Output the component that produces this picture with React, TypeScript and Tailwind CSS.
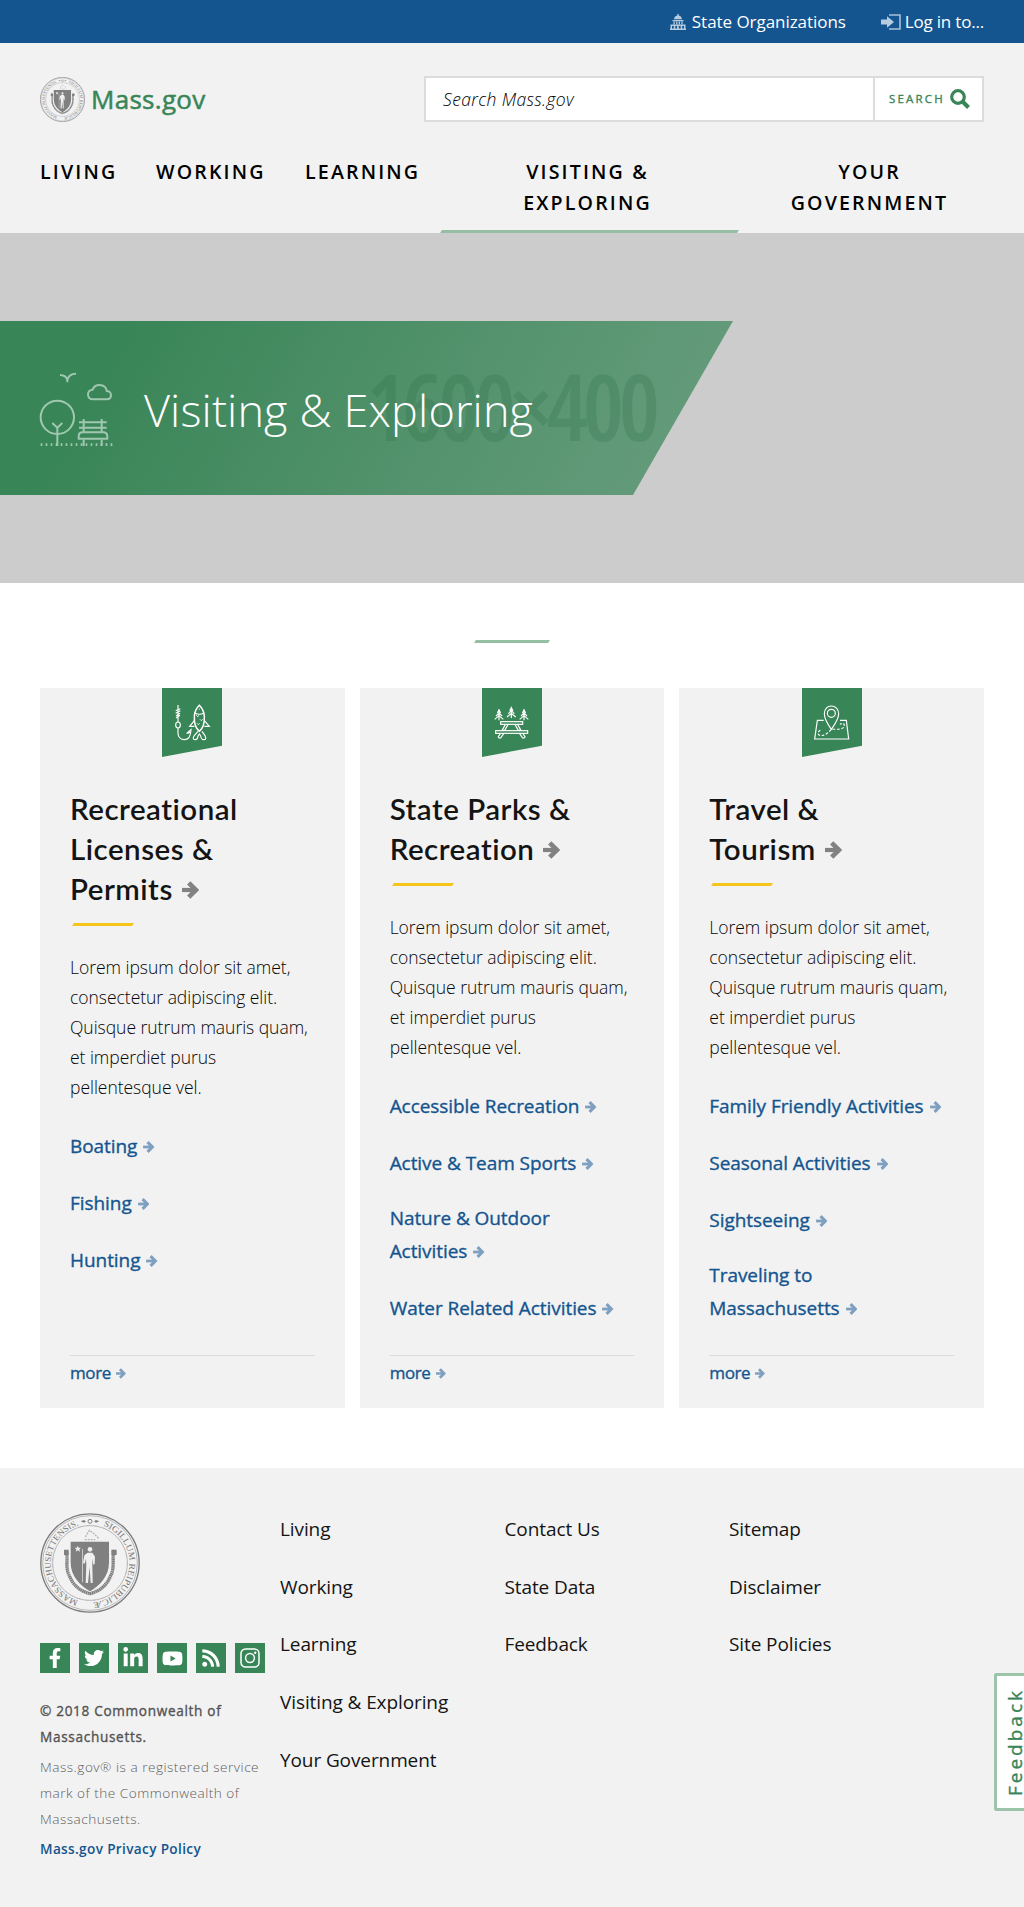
import React from "react";
import { FaFacebookF, FaTwitter, FaLinkedinIn, FaYoutube, FaRss } from "react-icons/fa";

const MEDIUM = "[-webkit-text-stroke:0.35px_currentColor]";

function Arrow({ className }: { className: string }) {
  return (
    <svg viewBox="0 0 17 18" className={className} fill="none" stroke="currentColor" strokeWidth="4.2">
      <path d="M0 9h13" />
      <path d="M6.7 1.8 13.9 9l-7.2 7.2" strokeWidth="4.6" />
    </svg>
  );
}

function Seal({ className }: { className: string }) {
  return (
    <svg viewBox="0 0 300 300" className={className}>
      <defs>
        <path id="seal-ring" d="M150 268 A118 118 0 1 1 150.5 268" />
      </defs>
      <g fill="none" stroke="#7b7b7b">
        <circle cx="150" cy="150" r="147.5" strokeWidth="4" />
        <circle cx="150" cy="150" r="142" strokeWidth="1.5" />
        <circle cx="150" cy="150" r="112" strokeWidth="3" strokeDasharray="2 1.5" />
      </g>
      <text fill="#777777" fontFamily="Liberation Serif, serif" fontSize="26">
        <textPath href="#seal-ring" startOffset="36" textLength="300" lengthAdjust="spacingAndGlyphs">
          MASSACHUSETTENSIS.
        </textPath>
      </text>
      <text fill="#777777" fontFamily="Liberation Serif, serif" fontSize="26">
        <textPath href="#seal-ring" startOffset="410" textLength="322" lengthAdjust="spacingAndGlyphs">
          SIGILLUM REIPUBLICÆ
        </textPath>
      </text>
      <g fill="#808080">
        <path d="M122 25l10-4 6 4-6 4zM178 25l-10-4-6 4 6 4z" />
        <circle cx="150" cy="25" r="6" fill="none" stroke="#808080" strokeWidth="3" />
        <path d="M92 86h115v62c0 42-27 70-57 87-30-17-58-45-58-87z" />
      </g>
      <g fill="none" stroke="#808080" strokeWidth="10">
        <path d="M78 112c8 20-4 50 10 76 12 30 32 46 62 54 30-8 50-24 62-54 14-26 2-56 12-76" strokeDasharray="5 1" />
        <path d="M72 118h14M214 118h16" strokeWidth="16" />
      </g>
      <path d="M134 80h32M136 72l12-20 14 10 14 14" fill="none" stroke="#b5b5b5" strokeWidth="4" strokeDasharray="6 3" />
      <g fill="#f0f0f0">
        <path d="M113 98l3 6 7 0-5 5 2 7-7-4-6 4 2-7-5-5 7 0z" />
        <circle cx="150" cy="109" r="7" />
        <path d="M143 119h14l8 12-1 22-4 2-2-18-1 18 1 55h-6l-3-48-5 48h-7l2-55-1-18-4 16-5-4 4-22z" />
        <path d="M126 108h2v100h-2z" />
      </g>
    </svg>
  );
}

function CapitolIcon() {
  return (
    <svg viewBox="0 0 16 16" className="h-4 w-4" fill="#b8cce0">
      <path d="M7.3 0h1.4v1.6C10.600 2 11.900 3.500 12 5.300H4C4.100 3.500 5.400 2 7.300 1.600zM2.500 6h11v1.300h-11z" />
      <path d="M3.500 7.600h1.300v2.600H3.500zM6.100 7.600h1.300v2.600H6.100zM8.700 7.600H10v2.600H8.700zM11.300 7.600h1.300v2.600h-1.300zM.500 10.400h15v1.500H.500zM.500 12H2v2.400H.500zM3.800 12h1.500v2.400H3.800zM7.100 12h1.700v2.400H7.100zM10.700 12h1.500v2.400h-1.500zM14 12h1.500v2.400H14zM0 14.400h16V16H0z" />
    </svg>
  );
}

function LoginIcon() {
  return (
    <svg viewBox="0 0 20 16" className="h-4 w-5">
      <path d="M8 1h11v14H8" fill="none" stroke="#a9c1d9" strokeWidth="1.6" />
      <path d="M0 5.500h6V2.200L13 8l-7 5.800v-3.300H0z" fill="#b8cce0" />
    </svg>
  );
}

function ParkIcon() {
  return (
    <svg viewBox="0 0 228 225" className="mt-[3px] h-[75px] w-[76px]" fill="none" stroke="#a0c7b0" strokeWidth="6" strokeLinejoin="round">
      <circle cx="55" cy="136" r="50" />
      <path d="M55 164v58M40 153l15 14 15-14" />
      <path d="M63 9c13 0 20 6 22 16v6M111 5c-15 0-24 8-26 20" />
      <path d="M161 82h42c8 0 13-5 13-12 0-8-6-13-13-13 0-10-9-18-21-18-10 0-18 5-21 14-9 0-14 7-14 14 0 9 6 15 14 15z" />
      <path d="M120 151h83M120 167h83M134 141v41M188 141v41" />
      <path d="M119 200v-6c0-8 5-13 12-13h61c8 0 13 5 13 13v6z" />
      <path d="M134 203v19M188 203v19" />
      <path d="M5 218h50M65 218h160" strokeDasharray="5 10" strokeWidth="8" />
    </svg>
  );
}

function InstagramIcon({ className }: { className: string }) {
  return (
    <svg viewBox="0 0 20 20" className={className} fill="none" stroke="currentColor" strokeWidth="1.500">
      <rect x="1" y="1" width="18" height="18" rx="4.500" />
      <circle cx="10" cy="10" r="4.400" />
      <circle cx="15.200" cy="4.800" r="1.200" fill="currentColor" stroke="none" />
    </svg>
  );
}

function FishArt() {
  return (
    <g>
      <path d="M48 51v52M41 68l14-6M41 76l14-8M42 84l12-8M42 90l12-8" />
      <ellipse cx="48" cy="111" rx="7" ry="9" />
      <path d="M48 120v16c0 11 8 19 19 19s19-8 20-30L74 136l10-3" />
      <path d="M112 52c-9 9-14 20-15 32-1 20 3 36 15 46 12-10 16-26 15-46-1-12-6-23-15-32z" strokeWidth="4.500" />
      <path d="M98 74c8 6 20 6 28 0M97 98l-14 17h14M127 98l15 17h-15" />
      <path d="M108 130l-10 11c-6 9-6 14 2 14 7 0 7-5 8-11l4-6 4 6c1 6 2 11 9 11 7 0 8-5 4-12l-9-13" />
      <path d="M103 82l4 4 4-4M114 94l4 4 4-4M105 106l4 4 4-4M112 62v3" strokeWidth="3" />
    </g>
  );
}

function Pine({ x, y }: { x: number; y: number }) {
  return (
    <g transform={`translate(${x} ${y})`}>
      <path d="M0 0v34M-5 12L0 3l5 9M-9 21l9-9 9 9M-13 31L0 20l13 11" />
    </g>
  );
}

function PicnicArt() {
  return (
    <g>
      <Pine x={51} y={63} />
      <Pine x={88} y={56} />
      <Pine x={126} y={63} />
      <rect x="56" y="101" width="66" height="8" />
      <rect x="41" y="128" width="96" height="8" />
      <path d="M70 110l-10 17h8l10-17M107 110l10 17h-8l-10-17M55 137l-6 9q0 5 7 4l9-13M123 137l6 9q0 5-7 4l-9-13" />
    </g>
  );
}

function MapArt() {
  return (
    <g>
      <path d="M88 124C76 107 67 92 67 77c0-14 9-23 21-23s22 9 22 23c0 15-10 30-22 47z" />
      <circle cx="88" cy="76" r="12" />
      <path d="M65 97H46l-8 56h102l-7-56h-19" />
      <path d="M55 127c-8 2-10 14-1 15 14 3 25-9 34-18 10-1 37 3 39-10 1-9-8-9-13-5" strokeDasharray="8 5" />
    </g>
  );
}

function Ribbon({ children }: { children: React.ReactNode }) {
  return (
    <svg viewBox="0 0 180 207" className="mx-auto block h-[69px] w-[60px]">
      <path d="M0 0h180v173L0 207z" fill="#388557" />
      <g fill="none" stroke="#fff" strokeWidth="3.500">{children}</g>
    </svg>
  );
}

const cards = [
  {
    lines: ["Recreational", "Licenses &", "Permits"],
    art: <FishArt />,
    links: [["Boating"], ["Fishing"], ["Hunting"]],
  },
  {
    lines: ["State Parks &", "Recreation"],
    art: <PicnicArt />,
    links: [["Accessible Recreation"], ["Active & Team Sports"], ["Nature & Outdoor", "Activities"], ["Water Related Activities"]],
  },
  {
    lines: ["Travel &", "Tourism"],
    art: <MapArt />,
    links: [["Family Friendly Activities"], ["Seasonal Activities"], ["Sightseeing"], ["Traveling to", "Massachusetts"]],
  },
];

const blurb = [
  "Lorem ipsum dolor sit amet,",
  "consectetur adipiscing elit.",
  "Quisque rutrum mauris quam,",
  "et imperdiet purus",
  "pellentesque vel.",
];

function Card({ card }: { card: (typeof cards)[number] }) {
  return (
    <section className="flex h-[720px] flex-col bg-[#f2f2f2] px-[30px] pb-[22px]">
      <Ribbon>{card.art}</Ribbon>
      <h2 className="mt-8 font-['Lato',sans-serif] text-[29.5px] leading-[40px] font-semibold tracking-[0.5px] text-[#141414]">
        {card.lines.map((line, i) => (
          <span key={line} className="block whitespace-nowrap">
            {line}
            {i === card.lines.length - 1 && <Arrow className="ml-[9px] inline-block h-[18px] w-[17px] align-[1px] text-[#828282]" />}
          </span>
        ))}
      </h2>
      <div className="mt-3.5 ml-[3px] h-[3px] w-[60px] shrink-0 -skew-x-[30deg] bg-[#f6c51b]" />
      <p className="mt-[26px] text-[17.5px] leading-[30px] font-light tracking-[-0.03px] text-[#050505]">
        {blurb.map((line) => (
          <span key={line} className="block whitespace-nowrap">{line}</span>
        ))}
      </p>
      <ul className="mt-7 flex flex-col gap-6 text-[19px] leading-[33px] tracking-[-0.06px] text-[#14558f]">
        {card.links.map((link) => (
          <li key={link[0]} className={link.length > 1 ? "-mt-0.5" : ""}>
            {link.map((line, i) => (
              <a key={line} className={`block whitespace-nowrap ${MEDIUM}`}>
                {line}
                {i === link.length - 1 && <Arrow className="ml-1.5 inline-block h-3 w-[11.5px] align-[0px] text-[#7f9fc0]" />}
              </a>
            ))}
          </li>
        ))}
      </ul>
      <div className="mt-auto border-t border-[#dcdcdc] pt-1 text-[17px] leading-[26px] tracking-[-0.4px] text-[#14558f]">
        <a className={MEDIUM}>
          more
          <Arrow className="ml-[5px] inline-block h-[11px] w-2.5 align-[0px] text-[#7f9fc0]" />
        </a>
      </div>
    </section>
  );
}

const footerColumns = [
  ["Living", "Working", "Learning", "Visiting & Exploring", "Your Government"],
  ["Contact Us", "State Data", "Feedback"],
  ["Sitemap", "Disclaimer", "Site Policies"],
];

const socials = [
  { Icon: FaFacebookF, size: "h-5 w-5" },
  { Icon: FaTwitter, size: "h-5 w-5" },
  { Icon: FaLinkedinIn, size: "h-[22px] w-[22px]" },
  { Icon: FaYoutube, size: "h-[21px] w-[21px]" },
  { Icon: FaRss, size: "h-5 w-5" },
  { Icon: InstagramIcon, size: "h-5 w-5" },
];

export default function App() {
  return (
    <div className="relative h-[1907px] w-[1024px] overflow-hidden bg-white font-['Open_Sans',sans-serif] text-[#141414]">
      <div className="flex h-[43px] items-center justify-end bg-[#14558f] pr-10 text-[17px] text-white">
        <a className="flex items-center gap-1.5 tracking-[-0.05px]">
          <CapitolIcon />
          State Organizations
        </a>
        <a className="ml-[35px] flex items-center gap-1 tracking-[-0.2px]">
          <LoginIcon />
          Log in to...
        </a>
      </div>

      <header className="flex h-[190px] flex-col bg-[#f2f2f2] px-10 pt-[33px]">
        <div className="flex h-[46px] items-center justify-between">
          <a className="flex items-center">
            <Seal className="h-[45px] w-[45px]" />
            <span className={`ml-1.5 text-[26px] leading-none tracking-[0.3px] text-[#388557] [-webkit-text-stroke:0.5px_currentColor]`}>Mass.gov</span>
          </a>
          <div className="flex h-[46px] w-[560px] border-2 border-[#dcdcdc] bg-white">
            <span className="flex grow items-center pl-[17px] text-[17.5px] font-light tracking-[0.37px] text-black italic">Search Mass.gov</span>
            <button className="flex w-[109px] items-center border-l-2 border-[#dcdcdc] pl-3.5 text-[#388557]">
              <span className={`text-[11.5px] font-normal tracking-[2.2px] ${MEDIUM}`}>SEARCH</span>
              <svg viewBox="0 0 20 20" className="ml-[5px] h-5 w-5" fill="none" stroke="currentColor">
                <circle cx="8" cy="8" r="6.300" strokeWidth="3.200" />
                <path d="M12.500 12.500l6 6" strokeWidth="4" />
              </svg>
            </button>
          </div>
        </div>
        <nav className="mt-[34px] flex h-[77px] text-[19.600px] leading-[31px] font-semibold tracking-[2.150px] text-black">
          <a className="w-[116px]">LIVING</a>
          <a className="w-[149px]">WORKING</a>
          <a className="w-[136px]">LEARNING</a>
          <a className="flex w-[297px] flex-col items-center text-center">
            <span className="mr-1">VISITING &amp;</span>
            <span className="mr-1">EXPLORING</span>
            <span className="mt-3 h-[3px] w-full -skew-x-[30deg] bg-[#94bfa5]" />
          </a>
          <a className="ml-[17px] grow text-center">
            YOUR
            <br />
            GOVERNMENT
          </a>
        </nav>
      </header>

      <div className="flex h-[350px] items-center bg-[#cccccc]">
        <div className="relative flex h-[174px] w-[733px] items-center bg-[linear-gradient(120deg,#388557_15%,#4f9069_52%,#699e7f_100%)] pl-[39px] [clip-path:polygon(0_0,100%_0,633px_100%,0_100%)]">
          <svg viewBox="0 0 733 174" className="absolute inset-0 h-full w-full">
            <text x="366" y="120" fill="#246b42" fillOpacity="0.22" fontFamily="Open Sans, sans-serif" fontStretch="75%" fontWeight="600" fontSize="92" textLength="294" lengthAdjust="spacing">
              1600×400
            </text>
          </svg>
          <ParkIcon />
          <h1 className="relative mt-[3px] ml-[29px] text-[45px] font-light tracking-[0.15px] whitespace-nowrap text-white">Visiting &amp; Exploring</h1>
        </div>
      </div>

      <div className="mx-auto mt-[57px] h-[3px] w-[74px] -skew-x-[30deg] bg-[#94bfa5]" />

      <main className="mt-[45px] grid grid-cols-3 gap-[15px] px-10">
        {cards.map((card) => (
          <Card key={card.lines[0]} card={card} />
        ))}
      </main>

      <footer className="mt-[60px] flex h-[439px] bg-[#f2f2f2] pl-10">
        <div className="w-60 pt-[45px]">
          <Seal className="h-[100px] w-[100px]" />
          <div className="mt-[30px] flex gap-[9px]">
            {socials.map(({ Icon, size }, i) => (
              <a key={i} className="flex h-[30px] w-[30px] items-center justify-center bg-[#388557] text-white">
                <Icon className={size} />
              </a>
            ))}
          </div>
          <div className="mt-[25px] flex flex-col gap-1 text-[13.600px] leading-[26px] whitespace-nowrap">
            <p className={`tracking-[0.68px] text-[#535353] ${MEDIUM}`}>
              © 2018 Commonwealth of
              <br />
              Massachusetts.
            </p>
            <p className="font-light tracking-[0.5px] text-[#606060]">
              Mass.gov® is a registered service
              <br />
              mark of the Commonwealth of
              <br />
              Massachusetts.
            </p>
            <a className="font-semibold tracking-[0.35px] text-[#14558f]">Mass.gov Privacy Policy</a>
          </div>
        </div>
        {footerColumns.map((column) => (
          <ul key={column[0]} className="flex w-[224.500px] flex-col gap-[24.700px] pt-[45px] text-[19px] leading-[33px] tracking-[-0.1px] whitespace-nowrap">
            {column.map((item) => (
              <li key={item}>{item}</li>
            ))}
          </ul>
        ))}
      </footer>

      <div className="absolute top-[1673px] right-0 flex h-[138px] w-[30px] items-center overflow-hidden rounded-l-[3px] border-y-[3px] border-l-[3px] border-[#9bc4aa] bg-white pl-[3px]">
        <span className={`rotate-180 text-[19px] leading-[30px] tracking-[3px] whitespace-nowrap text-[#388557] [writing-mode:vertical-rl] ${MEDIUM}`}>Feedback</span>
      </div>
    </div>
  );
}
